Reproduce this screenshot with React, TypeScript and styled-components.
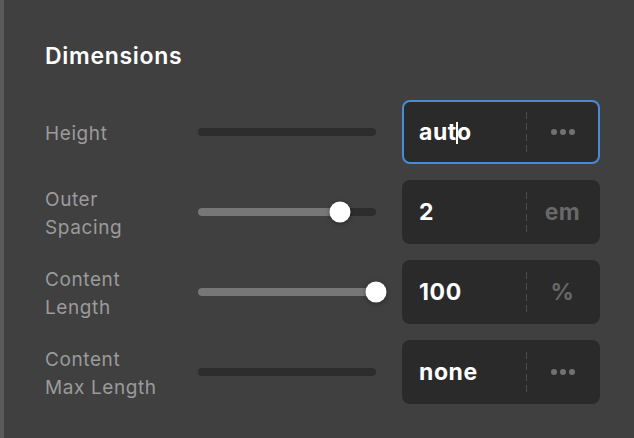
import React from 'react';
import styled, { createGlobalStyle } from 'styled-components';

const GlobalStyle = createGlobalStyle`
  html, body {
    margin: 0;
    padding: 0;
    background: #404040;
  }
  body {
    font-family: Inter, 'Noto Sans', 'Liberation Sans', sans-serif;
    -webkit-font-smoothing: antialiased;
  }
`;

const Panel = styled.div`
  box-sizing: border-box;
  height: 438px;
  width: 634px;
  background: #404040;
  border-left: 4px solid #5a5a5a;
  padding: 42px 34px 0 41px;
`;

const Title = styled.h2`
  margin: 0 0 30px;
  font-size: 23px;
  line-height: 28px;
  font-weight: 600;
  letter-spacing: 0.7px;
  color: #ffffff;
`;

const Rows = styled.div`
  display: flex;
  flex-direction: column;
  gap: 16px;
`;

const Row = styled.div`
  display: grid;
  grid-template-columns: 127px 178px 198px;
  column-gap: 26px;
  align-items: center;
  height: 64px;
`;

const Label = styled.div`
  padding-top: 3px;
  font-size: 19px;
  line-height: 28px;
  letter-spacing: 0.6px;
  color: #9b9b9b;
  white-space: pre-line;
`;

const Track = styled.div`
  position: relative;
  height: 8px;
  border-radius: 4px;
  background: #2d2d2d;
`;

const Fill = styled.div`
  position: absolute;
  left: 0;
  top: 0;
  bottom: 0;
  border-radius: 4px;
  background: #777777;
`;

const Thumb = styled.div`
  position: absolute;
  top: 50%;
  width: 21px;
  height: 21px;
  border-radius: 50%;
  background: #ffffff;
  transform: translate(-50%, -50%);
  box-shadow: 0 1px 5px rgba(0, 0, 0, 0.35);
`;

const Field = styled.div<{ $focused?: boolean }>`
  box-sizing: border-box;
  height: 64px;
  display: flex;
  align-items: center;
  border-radius: 8px;
  background: #2a2a2a;
  border: 2px solid ${({ $focused }) => ($focused ? '#4a8bd6' : 'transparent')};
`;

const Value = styled.div`
  flex: 1;
  padding-left: 15px;
  font-size: 23px;
  font-weight: 700;
  letter-spacing: 0.6px;
  color: #ffffff;
`;

const Caret = styled.span`
  display: inline-block;
  width: 1.5px;
  height: 22px;
  margin: 0 -1px 0 -0.5px;
  vertical-align: -4px;
  background: #ffffff;
`;

const Divider = styled.div`
  width: 1px;
  height: 40px;
  background: repeating-linear-gradient(
    to bottom,
    #4c4c4c 0,
    #4c4c4c 7px,
    transparent 7px,
    transparent 11px
  );
`;

const Suffix = styled.div`
  width: 71px;
  display: flex;
  justify-content: center;
  align-items: center;
  font-size: 23px;
  font-weight: 700;
  letter-spacing: 0.4px;
  color: #686868;
`;

const Dots = styled.div`
  display: flex;
  gap: 3px;

  span {
    width: 6px;
    height: 6px;
    border-radius: 50%;
    background: #727272;
  }
`;

type Dim = {
  label: string;
  value: string;
  unit?: string;
  pct?: number;
  focused?: boolean;
};

const dims: Dim[] = [
  { label: 'Height', value: 'auto', focused: true },
  { label: 'Outer\nSpacing', value: '2', unit: 'em', pct: 80 },
  { label: 'Content\nLength', value: '100', unit: '%', pct: 100 },
  { label: 'Content\nMax Length', value: 'none' },
];

const Slider = ({ pct }: { pct?: number }) => (
  <Track>
    {pct !== undefined && (
      <>
        <Fill style={{ width: `${pct}%` }} />
        <Thumb style={{ left: `${pct}%` }} />
      </>
    )}
  </Track>
);

export default function App() {
  return (
    <>
      <GlobalStyle />
      <Panel>
        <Title>Dimensions</Title>
        <Rows>
          {dims.map((d) => (
            <Row key={d.label}>
              <Label>{d.label}</Label>
              <Slider pct={d.pct} />
              <Field $focused={d.focused}>
                <Value>
                  {d.focused ? (
                    <>
                      {d.value.slice(0, 3)}
                      <Caret />
                      {d.value.slice(3)}
                    </>
                  ) : (
                    d.value
                  )}
                </Value>
                <Divider />
                <Suffix>
                  {d.unit ?? (
                    <Dots>
                      <span />
                      <span />
                      <span />
                    </Dots>
                  )}
                </Suffix>
              </Field>
            </Row>
          ))}
        </Rows>
      </Panel>
    </>
  );
}
